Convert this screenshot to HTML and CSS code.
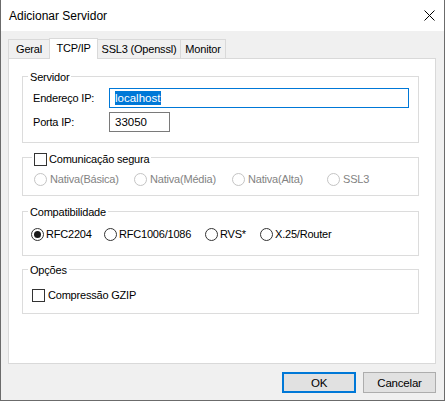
FILE: index.html
```html
<!DOCTYPE html>
<html lang="pt">
<head>
<meta charset="utf-8">
<title>Adicionar Servidor</title>
<link rel="stylesheet" href="styles.css">
</head>
<body>
<div class="window">
  <div class="titlebar">
    <span class="title">Adicionar Servidor</span>
    <svg class="close" width="11" height="11" viewBox="0 0 11 11"><path d="M0.5 0.5 L10.5 10.5 M10.5 0.5 L0.5 10.5" stroke="#000" stroke-width="1" fill="none"/></svg>
  </div>
  <div class="body">
    <div class="tabs">
      <div class="tab tab-geral">Geral</div>
      <div class="tab tab-active">TCP/IP</div>
      <div class="tab tab-ssl">SSL3 (Openssl)</div>
      <div class="tab tab-monitor">Monitor</div>
    </div>
    <div class="panel">
      <div class="group g-server">
        <span class="gtitle">Servidor</span>
        <div class="row">
          <span class="lbl">Endereço IP:</span>
          <div class="input input-host focus"><span class="sel">localhost</span></div>
        </div>
        <div class="row">
          <span class="lbl">Porta IP:</span>
          <div class="input input-port">33050</div>
        </div>
      </div>
      <div class="group g-secure">
        <span class="gtitle gtitle-check"><span class="check"></span><span class="ctext">Comunicação segura</span></span>
        <div class="radios radios-secure">
          <span class="opt disabled"><span class="radio"></span>Nativa(Básica)</span>
          <span class="opt disabled"><span class="radio"></span>Nativa(Média)</span>
          <span class="opt disabled"><span class="radio"></span>Nativa(Alta)</span>
          <span class="opt disabled"><span class="radio"></span>SSL3</span>
        </div>
      </div>
      <div class="group g-compat">
        <span class="gtitle">Compatibilidade</span>
        <div class="radios radios-compat">
          <span class="opt"><span class="radio checked"></span>RFC2204</span>
          <span class="opt"><span class="radio"></span>RFC1006/1086</span>
          <span class="opt"><span class="radio"></span>RVS*</span>
          <span class="opt"><span class="radio"></span>X.25/Router</span>
        </div>
      </div>
      <div class="group g-opts">
        <span class="gtitle">Opções</span>
        <span class="opt opt-check"><span class="check"></span>Compressão GZIP</span>
      </div>
    </div>
    <div class="buttons">
      <button class="btn btn-default">OK</button>
      <button class="btn btn-cancel">Cancelar</button>
    </div>
  </div>
</div>
</body>
</html>
```

FILE: styles.css
```css
* { box-sizing: border-box; }
html, body { margin: 0; padding: 0; background: #ffffff; }
body {
  font-family: "Liberation Sans", Arial, sans-serif;
  font-size: 11px;
  color: #000;
}
.window {
  width: 445px;
  height: 401px;
  border-left: 1px solid #6b6b6b;
  border-right: 1px solid #6b6b6b;
  border-bottom: 1px solid #6b6b6b;
  display: flex;
  flex-direction: column;
}
.titlebar {
  height: 31px;
  flex: none;
  background: #fff;
  display: flex;
  align-items: center;
  padding-left: 8px;
}
.title { font-size: 12px; }
.close { margin-left: auto; margin-right: 9px; margin-top: -1px; display: block; }
.body {
  flex: 1;
  background: #f0f0f0;
  padding: 7px 8px 0 7px;
  letter-spacing: -0.2px;
}
.tabs {
  display: flex;
  align-items: flex-end;
  height: 20px;
}
.tab {
  height: 19px;
  line-height: 18px;
  text-align: center;
  border-top: 1px solid #d9d9d9;
  background: #f0f0f0;
}
.tab-geral { width: 41px; border-left: 1px solid #d9d9d9; }
.tab-active {
  position: relative;
  width: 49px;
  height: 21px;
  margin-bottom: -1px;
  background: #fff;
  border-left: 1px solid #d9d9d9;
  border-right: 1px solid #d9d9d9;
  line-height: 19px;
}
.tab-ssl { width: 83px; border-right: 1px solid #d9d9d9; }
.tab-monitor { width: 45px; border-right: 1px solid #d9d9d9; }
.panel {
  height: 306px;
  background: #fff;
  border: 1px solid #d9d9d9;
  padding: 17px 0 0 13px;
}
.group {
  position: relative;
  width: 397px;
  border: 1px solid #dcdcdc;
}
.gtitle {
  position: absolute;
  top: -7px;
  left: 5px;
  line-height: 15px;
  padding: 0 2px;
  background: #fff;
}
.gtitle-check {
  left: 9px;
  top: -6px;
  display: flex;
  align-items: center;
  gap: 2px;
}
.g-server { padding: 11px 0 10px 10px; }
.row { display: flex; align-items: center; height: 20px; }
.row + .row { margin-top: 4px; }
.lbl { width: 76px; flex: none; }
.input {
  height: 20px;
  border: 1px solid #7a7a7a;
  padding-left: 5px;
  display: flex;
  align-items: center;
  letter-spacing: 0;
  font-size: 11.5px;
}
.input.focus { border-color: #0078d7; }
.input-host { width: 300px; }
.input-port { width: 61px; }
.sel { background: #0078d7; color: #fff; line-height: 14px; padding-right: 1px; }
.g-secure { margin-top: 14px; padding: 15px 0 9px 11px; }
.g-compat { margin-top: 15px; padding: 16px 0 14px 8px; }
.g-opts { margin-top: 13px; padding: 19px 0 11px 9px; }
.radios { display: grid; height: 13px; }
.radios-secure { grid-template-columns: 100px 98px 95px auto; }
.radios-compat { grid-template-columns: 73px 101px 55px auto; }
.opt {
  display: flex;
  align-items: center;
  gap: 2px;
  line-height: 13px;
  white-space: nowrap;
}
.opt.disabled { color: #838383; gap: 3px; }
.opt-check { gap: 3px; height: 13px; }
.radio {
  width: 13px;
  height: 13px;
  flex: none;
  border-radius: 50%;
  border: 1px solid #333;
  background: #fff;
  display: flex;
  align-items: center;
  justify-content: center;
}
.opt.disabled .radio { border-color: #c4c4c4; }
.radio.checked::after {
  content: "";
  width: 7px;
  height: 7px;
  border-radius: 50%;
  background: #1a1a1a;
}
.check {
  width: 13px;
  height: 13px;
  flex: none;
  border: 1px solid #333;
  background: #fff;
}
.buttons {
  display: flex;
  justify-content: flex-end;
  gap: 7px;
  margin-top: 8px;
}
.btn {
  height: 21px;
  margin: 0;
  padding: 0;
  background: #e1e1e1;
  font-family: "Liberation Sans", Arial, sans-serif;
  font-size: 11.5px;
  color: #000;
  letter-spacing: -0.2px;
}
.btn-default { width: 74px; border: 2px solid #0078d7; }
.btn-cancel { width: 73px; border: 1px solid #adadad; }
```
